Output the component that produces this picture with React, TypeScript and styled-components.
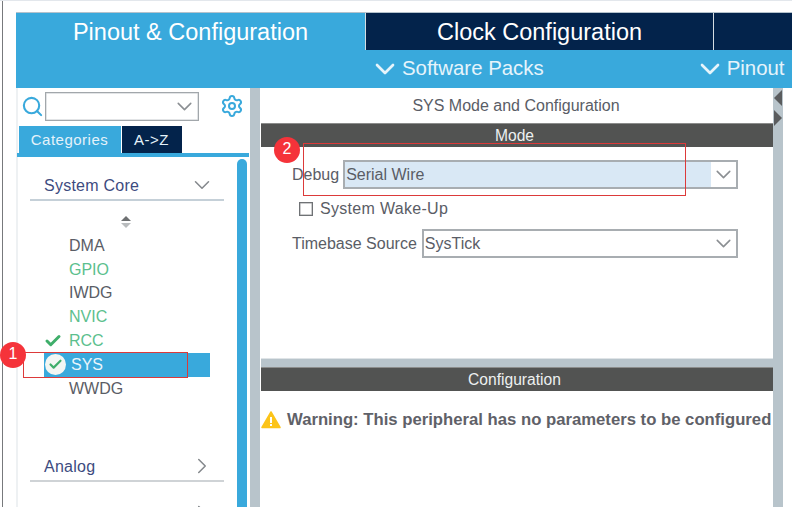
import styled, { createGlobalStyle } from "styled-components";
import { Check, ChevronDown, ChevronRight, Search, Settings } from "lucide-react";

const GlobalStyle = createGlobalStyle`
  html, body {
    margin: 0;
    padding: 0;
    background: #fff;
    overflow: hidden;
  }
  * { box-sizing: border-box; }
`;

const BLUE = "#39a9dc";
const NAVY = "#03234b";
const SASH = "#b8c4cb";
const BAR = "#525352";
const TEXT = "#5a5d66";

const Page = styled.div`
  position: relative;
  width: 792px;
  height: 507px;
  overflow: hidden;
  font-family: "Liberation Sans", Arial, sans-serif;
  background: #fff;
  border-top: 1px solid #e3e7ec;
`;

const Window = styled.div`
  margin-left: 2px;
  height: 506px;
  padding: 12px 0 0 13px;
  border-left: 1px solid #77797c;
  display: flex;
  flex-direction: column;
`;

const TabRow = styled.div`
  display: flex;
  height: 37px;
  flex: none;
  box-shadow: 0 -1px 0 #b4c2cc;
`;

const MainTab = styled.div<{ $active?: boolean; $width: number }>`
  flex: none;
  width: ${(p) => p.$width}px;
  background: ${(p) => (p.$active ? BLUE : NAVY)};
  color: #fff;
  font-size: 23.5px;
  line-height: 39px;
  text-align: center;
  border-right: 1px solid #d5dde2;
  &:last-child { border-right: none; flex: 1; }
`;

const SubBar = styled.div`
  flex: none;
  height: 38px;
  background: ${BLUE};
  color: #e6f4fb;
  display: flex;
  align-items: center;
  font-size: 20.4px;
  padding-left: 353px;
  padding-bottom: 1px;
`;

const SubItem = styled.div<{ $gap?: number }>`
  display: flex;
  align-items: center;
  gap: 1px;
  margin-left: ${(p) => p.$gap ?? 0}px;
  white-space: nowrap;
  svg { flex: none; }
`;

const Body = styled.div`
  flex: 1;
  min-height: 0;
  display: flex;
`;

const LeftPanel = styled.div`
  flex: none;
  width: 234px;
  display: flex;
  flex-direction: column;
  border-left: 2px solid #eef1f3;
`;

const SearchRow = styled.div`
  flex: none;
  height: 38px;
  display: flex;
  align-items: center;
  padding: 2px 0 4px 3px;
  color: ${BLUE};
`;

const SearchBox = styled.div`
  width: 154px;
  height: 29px;
  margin-left: 1px;
  border: 1px solid #a2a7ab;
  box-shadow: inset 0 0 0 0.5px #c6cacd;
  display: flex;
  align-items: center;
  justify-content: flex-end;
  padding-right: 1px;
  color: #8b8f93;
`;

const GearSlot = styled.div`
  margin-left: 21px;
  display: flex;
  color: ${BLUE};
`;

const SideTabs = styled.div`
  flex: none;
  display: flex;
  height: 27px;
  padding-left: 1px;
  gap: 1px;
`;

const SideTab = styled.div<{ $active?: boolean; $width: number }>`
  width: ${(p) => p.$width}px;
  background: ${(p) => (p.$active ? BLUE : NAVY)};
  color: #e4f2fa;
  font-size: 15px;
  letter-spacing: 0.5px;
  line-height: 27px;
  text-align: center;
  padding-right: 1px;
`;

const SideRule = styled.div`
  flex: none;
  height: 4px;
  background: ${BLUE};
  margin-left: -1px;
  margin-right: 1px;
`;

const SideContent = styled.div`
  flex: 1;
  min-height: 0;
  display: flex;
  overflow: hidden;
`;

const CategoryColumn = styled.div`
  flex: none;
  width: 219px;
  display: flex;
  flex-direction: column;
  padding-top: 17px;
`;

const CategoryHead = styled.div<{ $dim?: boolean }>`
  flex: none;
  height: 27px;
  margin-left: 12px;
  width: 194px;
  display: flex;
  justify-content: space-between;
  align-items: flex-start;
  padding: 0 9px 0 14px;
  color: #3d4b80;
  font-size: 16px;
  letter-spacing: 0.25px;
  line-height: 24px;
  border-bottom: 2px solid ${(p) => (p.$dim ? "#cfd3d6" : "#c5d0d8")};
  svg { color: #85898d; flex: none; margin-top: -2px; }
`;

const SortArrows = styled.div`
  flex: none;
  margin: 15px 0 0 103px;
  width: 10px;
  height: 14px;
  display: flex;
  flex-direction: column;
  gap: 2px;
  align-items: center;
`;

const SortArrow = styled.div<{ $down?: boolean }>`
  width: 0;
  height: 0;
  border-left: 5px solid transparent;
  border-right: 5px solid transparent;
  ${(p) =>
    p.$down
      ? "border-top: 5px solid #b9bcbe;"
      : "border-bottom: 5px solid #6e7072;"}
`;

const ItemList = styled.div`
  flex: none;
  margin-top: 4px;
  display: flex;
  flex-direction: column;
  padding-left: 26px;
`;

const Item = styled.div<{ $tone?: "ok"; $selected?: boolean }>`
  height: 23.8px;
  width: 166px;
  display: flex;
  align-items: center;
  font-size: 16px;
  color: ${(p) => (p.$selected ? "#eaf5fb" : p.$tone === "ok" ? "#5cbf8e" : TEXT)};
  background: ${(p) => (p.$selected ? BLUE : "transparent")};
  padding-left: ${(p) => (p.$selected ? 1 : 25)}px;
`;

const CheckMark = styled.span`
  display: flex;
  width: 18px;
  margin-left: -25px;
  margin-right: 7px;
  color: #3fae6a;
`;

const CheckBadge = styled.span`
  width: 21px;
  height: 21px;
  border-radius: 50%;
  background: #f2f6f3;
  color: #3fae6a;
  display: flex;
  align-items: center;
  justify-content: center;
  margin-right: 5px;
`;

const Spacer = styled.div<{ $h: number }>`
  flex: none;
  height: ${(p) => p.$h}px;
`;

const ScrollTrack = styled.div`
  flex: none;
  width: 10px;
  margin-top: 2px;
  background: ${BLUE};
  border-radius: 5px 5px 0 0;
`;

const VSash = styled.div`
  flex: none;
  width: 10px;
  background: ${SASH};
`;

const RightPanel = styled.div`
  flex: none;
  width: 512px;
  margin-left: 1px;
  display: flex;
  flex-direction: column;
`;

const PanelTitle = styled.div`
  flex: none;
  height: 35px;
  line-height: 35px;
  text-align: center;
  font-size: 16px;
  color: ${TEXT};
  padding-right: 2px;
`;

const SectionBar = styled.div`
  flex: none;
  height: 24px;
  background: ${BAR};
  border-top: 1px solid #8b8c8b;
  color: #edf0f0;
  font-size: 15.6px;
  line-height: 23px;
  text-align: center;
  padding-right: 5px;
`;

const ModeBody = styled.div`
  flex: none;
  height: 211px;
  padding: 13px 35px 0 31px;
  display: flex;
  flex-direction: column;
`;

const FieldRow = styled.div`
  display: flex;
  align-items: center;
  height: 29px;
  font-size: 16px;
  color: ${TEXT};
  white-space: nowrap;
`;

const Select = styled.div<{ $left: number }>`
  flex: 1;
  height: 29px;
  margin-left: ${(p) => p.$left}px;
  border: 2px solid #a8adb1;
  display: flex;
  align-items: center;
  background: #fff;
  color: ${TEXT};
  overflow: hidden;
`;

const SelectValue = styled.div<{ $fill?: boolean }>`
  flex: 1;
  align-self: stretch;
  line-height: 25px;
  padding-left: 1px;
  background: ${(p) => (p.$fill ? "#d9e8f5" : "transparent")};
`;

const SelectArrow = styled.div`
  flex: none;
  width: 25px;
  height: 25px;
  display: flex;
  align-items: center;
  color: #8b8f93;
  svg { flex: none; }
`;

const CheckRow = styled.div`
  height: 27px;
  margin: 6px 0 7px 7px;
  display: flex;
  align-items: center;
  gap: 7px;
  font-size: 16px;
  letter-spacing: 0.3px;
  color: ${TEXT};
`;

const CheckBox = styled.div`
  width: 14px;
  height: 14px;
  border: 1px solid #6f7275;
  box-shadow: inset 0 0 0 0.5px #9a9c9e;
`;

const HSash = styled.div`
  flex: none;
  height: 9px;
  background: ${SASH};
  border-top: 1px solid #dfe4e7;
`;

const WarningRow = styled.div`
  display: flex;
  align-items: center;
  gap: 6px;
  padding-top: 19px;
  font-size: 16.7px;
  font-weight: 700;
  color: #5f6168;
  white-space: nowrap;
  svg { flex: none; }
`;

const Collapse = styled.div`
  flex: none;
  width: 10px;
  background: ${SASH};
  display: flex;
  flex-direction: column;
  align-items: center;
  padding-top: 2px;
  gap: 4px;
`;

const CollapseArrow = styled.div<{ $right?: boolean }>`
  width: 0;
  height: 0;
  border-top: 8px solid transparent;
  border-bottom: 8px solid transparent;
  ${(p) =>
    p.$right
      ? "border-left: 8px solid #5a5c5e;"
      : "border-right: 8px solid #5a5c5e;"}
`;

// annotations painted on top of the screenshot
const RedBox = styled.div<{ $x: number; $y: number; $w: number; $h: number }>`
  position: absolute;
  left: ${(p) => p.$x}px;
  top: ${(p) => p.$y}px;
  width: ${(p) => p.$w}px;
  height: ${(p) => p.$h}px;
  border: 1px solid #dc3a3a;
`;

const Marker = styled.div<{ $x: number; $y: number }>`
  position: absolute;
  left: ${(p) => p.$x}px;
  top: ${(p) => p.$y}px;
  width: 26px;
  height: 26px;
  border-radius: 50%;
  background: #f5333a;
  color: #fff;
  font-size: 16px;
  line-height: 24px;
  text-align: center;
`;

function WarningIcon() {
  return (
    <svg width="20" height="18" viewBox="0 0 20 18">
      <path d="M10 1 L19 16.5 H1 Z" fill="#fcc419" stroke="#fcc419" strokeWidth="1.5" strokeLinejoin="round" />
      <rect x="9" y="6" width="2" height="6" fill="#fff" />
      <rect x="9" y="13" width="2" height="2" fill="#fff" />
    </svg>
  );
}

export default function App() {
  return (
    <>
      <GlobalStyle />
      <Page>
        <Window>
          <TabRow>
            <MainTab $active $width={350}>Pinout &amp; Configuration</MainTab>
            <MainTab $width={348}>Clock Configuration</MainTab>
            <MainTab $width={78} />
          </TabRow>
          <SubBar>
            <SubItem>
              <ChevronDown size={32} strokeWidth={2} />
              Software Packs
            </SubItem>
            <SubItem $gap={150}>
              <ChevronDown size={32} strokeWidth={2} />
              Pinout
            </SubItem>
          </SubBar>
          <Body>
            <LeftPanel>
              <SearchRow>
                <Search size={23} strokeWidth={2.2} />
                <SearchBox>
                  <ChevronDown size={25} strokeWidth={1.5} />
                </SearchBox>
                <GearSlot>
                  <Settings size={24} strokeWidth={2} />
                </GearSlot>
              </SearchRow>
              <SideTabs>
                <SideTab $active $width={102}>Categories</SideTab>
                <SideTab $width={60}>A-&gt;Z</SideTab>
              </SideTabs>
              <SideRule />
              <SideContent>
                <CategoryColumn>
                  <CategoryHead>
                    System Core
                    <ChevronDown size={26} strokeWidth={1.4} />
                  </CategoryHead>
                  <SortArrows>
                    <SortArrow />
                    <SortArrow $down />
                  </SortArrows>
                  <ItemList>
                    <Item>DMA</Item>
                    <Item $tone="ok">GPIO</Item>
                    <Item>IWDG</Item>
                    <Item $tone="ok">NVIC</Item>
                    <Item $tone="ok">
                      <CheckMark>
                        <Check size={18} strokeWidth={4} />
                      </CheckMark>
                      RCC
                    </Item>
                    <Item $selected>
                      <CheckBadge>
                        <Check size={15} strokeWidth={3.4} />
                      </CheckBadge>
                      SYS
                    </Item>
                    <Item>WWDG</Item>
                  </ItemList>
                  <Spacer $h={54} />
                  <CategoryHead $dim>
                    Analog
                    <ChevronRight size={26} strokeWidth={1.4} />
                  </CategoryHead>
                  <Spacer $h={20} />
                  <CategoryHead $dim>
                    <span />
                    <ChevronRight size={26} strokeWidth={1.4} />
                  </CategoryHead>
                </CategoryColumn>
                <ScrollTrack />
              </SideContent>
            </LeftPanel>
            <VSash />
            <RightPanel>
              <PanelTitle>SYS Mode and Configuration</PanelTitle>
              <SectionBar>Mode</SectionBar>
              <ModeBody>
                <FieldRow>
                  Debug
                  <Select $left={4}>
                    <SelectValue $fill>Serial Wire</SelectValue>
                    <SelectArrow>
                      <ChevronDown size={25} strokeWidth={1.5} />
                    </SelectArrow>
                  </Select>
                </FieldRow>
                <CheckRow>
                  <CheckBox />
                  System Wake-Up
                </CheckRow>
                <FieldRow>
                  Timebase Source
                  <Select $left={5}>
                    <SelectValue>SysTick</SelectValue>
                    <SelectArrow>
                      <ChevronDown size={25} strokeWidth={1.5} />
                    </SelectArrow>
                  </Select>
                </FieldRow>
              </ModeBody>
              <HSash />
              <SectionBar>Configuration</SectionBar>
              <WarningRow>
                <WarningIcon />
                Warning: This peripheral has no parameters to be configured
              </WarningRow>
            </RightPanel>
            <Collapse>
              <CollapseArrow />
              <CollapseArrow $right />
            </Collapse>
          </Body>
        </Window>
        <RedBox $x={23} $y={351} $w={165} $h={26} />
        <RedBox $x={303} $y={142} $w={383} $h={53} />
        <Marker $x={0} $y={341}>1</Marker>
        <Marker $x={274} $y={136}>2</Marker>
      </Page>
    </>
  );
}
